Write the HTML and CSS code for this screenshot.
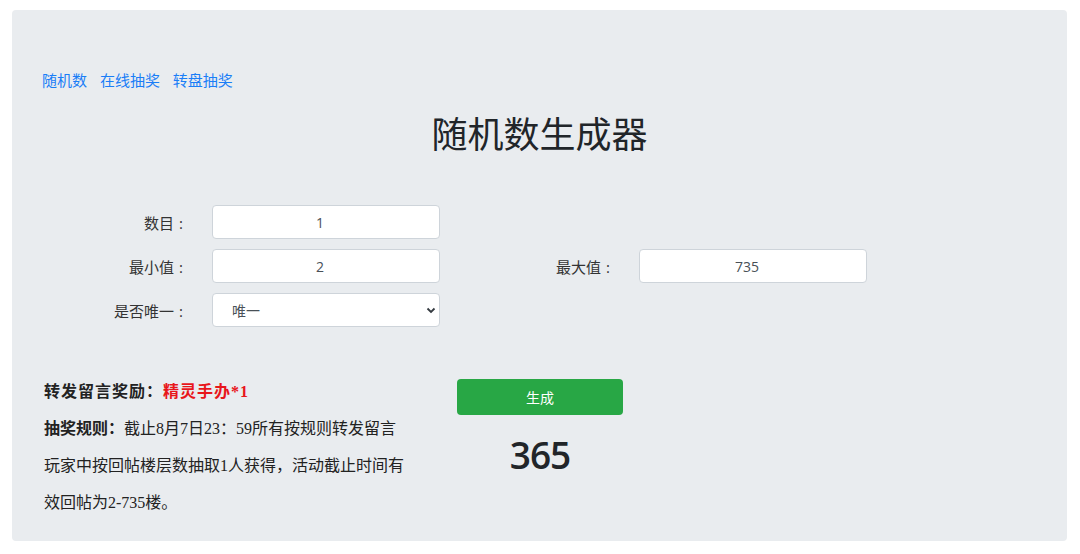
FILE: index.html
```html
<!DOCTYPE html>
<html>
<head>
    <meta charset="utf-8">
    <title>随机数生成器</title>
    <link rel="stylesheet" href="styles.css">
</head>
<body>
    <div class="jumbotron">
        <nav class="links">
            <a href="#">随机数</a>
            <a href="#">在线抽奖</a>
            <a href="#">转盘抽奖</a>
        </nav>
        <h1 class="title">随机数生成器</h1>
        <form class="form-grid">
            <label class="lbl">数目<span class="colon">:</span></label>
            <input class="field" type="text" value="1">
            <span></span><span></span>
            <label class="lbl">最小值<span class="colon">:</span></label>
            <input class="field" type="text" value="2">
            <label class="lbl">最大值<span class="colon">:</span></label>
            <input class="field" type="text" value="735">
            <label class="lbl">是否唯一<span class="colon">:</span></label>
            <div class="select-wrap">
                <select class="field select">
                    <option>唯一</option>
                    <option>不唯一</option>
                </select>
                <svg class="chevron" width="10" height="8" viewBox="0 0 10 8"><path d="M1.5 2.5 L5 6 L8.5 2.5" fill="none" stroke="#343a40" stroke-width="1.8"/></svg>
            </div>
        </form>
        <div class="bottom">
            <div class="rules">
                <p class="prize"><b class="key">转发留言奖励：</b><b class="red">精灵手办*1</b></p>
                <p><b class="key">抽奖规则：</b>截止8月7日23：59所有按规则转发留言玩家中按回帖楼层数抽取1人获得，活动截止时间有效回帖为2-735楼。</p>
            </div>
            <div class="action">
                <button type="button" class="btn-go" onclick="gen()">生成</button>
                <div class="result" id="result">365</div>
            </div>
        </div>
    </div>
    <script>
    function gen() {
        var f = document.querySelectorAll(".field");
        var min = parseInt(f[1].value), max = parseInt(f[2].value);
        document.getElementById("result").textContent = Math.floor(Math.random() * (max - min + 1)) + min;
    }
    </script>
</body>
</html>
```

FILE: styles.css
```css
* { box-sizing: border-box; }
html, body { margin: 0; padding: 0; background: #fff; }
body { font-family: "Open Sans", "Noto Sans CJK SC", sans-serif; color: #212529; }
.jumbotron { margin: 10px 13px 13px 12px; background: #e9ecef; border-radius: 4px; padding: 60px 30px 20px 30px; height: 531px; }
.links { font-size: 15px; line-height: 20px; }
.links a { color: #1a7ef7; text-decoration: none; margin-right: 9px; }
.title { margin: 23px 0 0 0; text-align: center; font-size: 36px; line-height: 44px; font-weight: 400; color: #212529; }
.form-grid { margin-top: 48px; display: grid; grid-template-columns: 146px 228px 151px 228px; column-gap: 24px; row-gap: 10px; grid-auto-rows: 34px; align-items: center; }
.lbl { text-align: right; font-size: 15px; color: #333; padding-right: 5px; }
.colon { margin-left: 5px; }
.field { width: 100%; height: 34px; border: 1px solid #ced4da; border-radius: 4px; background: #fff; font-family: "Open Sans", "Noto Sans CJK SC", sans-serif; font-size: 14px; color: #495057; text-align: center; outline: none; padding: 0 12px 0 0; }
.select-wrap { position: relative; height: 34px; }
.select { appearance: none; -webkit-appearance: none; text-align: left; padding-left: 19px; }
.chevron { position: absolute; right: 4px; top: 13px; }
.bottom { margin-top: 46px; display: flex; }
.rules { flex: 0 0 415px; padding: 0 50px 0 2px; font-family: "Liberation Serif", "Noto Sans CJK SC", serif; font-size: 16px; line-height: 37px; color: #222; }
.rules p { margin: 0; }
.rules b { font-weight: 700; }
.key { display: inline-block; }
.prize { letter-spacing: 1px; }
.red { color: #e8161b; }
.action { flex: 0 0 166px; display: flex; flex-direction: column; align-items: center; padding-top: 6px; }
.btn-go { width: 166px; height: 36px; border: none; border-radius: 4px; background: #28a745; color: #fff; font-family: "Noto Sans CJK SC", sans-serif; font-size: 14px; }
.result { margin-top: 18px; font-size: 37px; line-height: 44px; font-weight: 600; letter-spacing: -1px; color: #212529; }
```
